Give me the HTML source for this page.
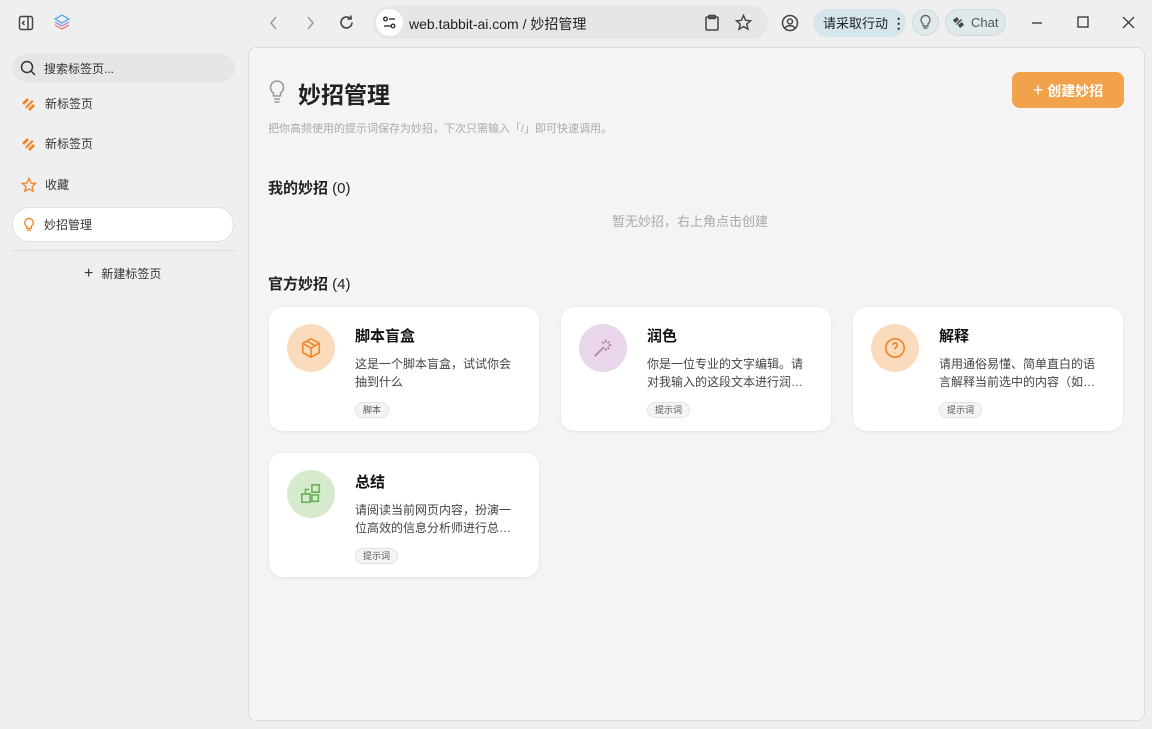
<!DOCTYPE html>
<html><head><meta charset="utf-8"><style>
*{box-sizing:border-box;margin:0;padding:0}
body{width:1152px;height:729px;background:#efefef;font-family:"Liberation Sans","Noto Sans CJK SC",sans-serif;position:relative;overflow:hidden;color:#222}
.abs{position:absolute}
.side-item{position:absolute;left:12px;width:222px;height:35px;display:flex;align-items:center;padding-left:9px;font-size:12px;color:#333}
.side-item svg{margin-right:8px}
.main{position:absolute;left:248px;top:47px;width:897px;height:674px;background:#f4f4f6;border:1px solid #ddd;border-radius:8px}
.card{position:absolute;width:270px;height:124px;background:#fff;border-radius:14px;box-shadow:0 1px 3px rgba(0,0,0,.08)}
.card .ic{position:absolute;left:18px;top:17px;width:48px;height:48px;border-radius:50%;display:flex;align-items:center;justify-content:center}
.card h3{position:absolute;left:86px;top:18px;font-size:15px;font-weight:bold;color:#111}
.card p{position:absolute;left:86px;top:48px;width:162px;font-size:12px;line-height:18px;color:#444;display:-webkit-box;-webkit-line-clamp:2;-webkit-box-orient:vertical;overflow:hidden}
.card .tag{position:absolute;left:86px;top:95px;height:16px;padding:0 7px;font-size:9px;line-height:14px;border:1px solid #e2e2e2;background:#f4f4f4;border-radius:8px;color:#555}
</style></head><body>
<!-- top bar -->
<svg class="abs" style="left:18px;top:15px" width="16" height="16" viewBox="0 0 16 16" fill="none" stroke="#444" stroke-width="1.5"><rect x="1.5" y="1.5" width="13" height="13" rx="2"/><path d="M10 2v12M6.5 6l-2 2 2 2"/></svg>
<svg class="abs" style="left:53px;top:13px" width="18" height="18" viewBox="0 0 18 18" fill="none" stroke-width="1.4"><path d="M9 2l7 4-7 4-7-4z" stroke="#5ab0e8"/><path d="M2 9l7 4 7-4" stroke="#b08ad8"/><path d="M2 12l7 4 7-4" stroke="#f08080"/></svg>
<svg class="abs" style="left:268px;top:15px" width="12" height="16" viewBox="0 0 12 16" fill="none" stroke="#999" stroke-width="1.5"><path d="M8 2L3 8l5 6"/></svg>
<svg class="abs" style="left:304px;top:15px" width="12" height="16" viewBox="0 0 12 16" fill="none" stroke="#999" stroke-width="1.5"><path d="M4 2l5 6-5 6"/></svg>
<svg class="abs" style="left:338px;top:14px" width="17" height="17" viewBox="0 0 17 17" fill="none" stroke="#444" stroke-width="1.6"><path d="M14 8.5A5.5 5.5 0 1 1 12 4.2"/><path d="M13 1.5v3.5H9.5"/></svg>
<div class="abs" style="left:373px;top:6px;width:395px;height:33px;border-radius:17px;background:#e6e6e6"></div>
<div class="abs" style="left:376px;top:9px;width:27px;height:27px;border-radius:50%;background:#fff"></div>
<svg class="abs" style="left:382px;top:15px" width="15" height="15" viewBox="0 0 15 15" fill="none" stroke="#333" stroke-width="1.4"><circle cx="3.5" cy="4" r="1.8"/><path d="M7 4h6"/><circle cx="11" cy="11" r="1.8"/><path d="M2 11h7"/></svg>
<div class="abs" style="left:409px;top:14px;font-size:14px;color:#222">web.tabbit-ai.com / 妙招管理</div>
<svg class="abs" style="left:704px;top:14px" width="16" height="17" viewBox="0 0 16 17" fill="none" stroke="#444" stroke-width="1.5"><rect x="2" y="3" width="12" height="13" rx="1"/><rect x="5" y="1.5" width="6" height="3"/></svg>
<svg class="abs" style="left:735px;top:14px" width="17" height="17" viewBox="0 0 24 24" fill="none" stroke="#444" stroke-width="2"><path d="M12 2l3 7 7 .6-5.4 4.7 1.7 7.2L12 17.8 5.7 21.5l1.7-7.2L2 9.6 9 9z"/></svg>
<svg class="abs" style="left:781px;top:14px" width="18" height="18" viewBox="0 0 18 18" fill="none" stroke="#444" stroke-width="1.5"><circle cx="9" cy="9" r="7.5"/><circle cx="9" cy="7.5" r="2.5"/><path d="M4 14c2-3 8-3 10 0"/></svg>
<div class="abs" style="left:813px;top:9px;width:93px;height:28px;border-radius:14px;background:#d5e7ec;font-size:13px;line-height:28px;padding-left:10px;color:#222">请采取行动 <b style="font-size:14px">⋮</b></div>
<div class="abs" style="left:912px;top:9px;width:27px;height:27px;border-radius:50%;background:#dfe9ec;border:1px solid #cbdadf"></div>
<svg class="abs" style="left:919px;top:14px" width="13" height="17" viewBox="0 0 13 17" fill="none" stroke="#555" stroke-width="1.2"><path d="M6.5 1.5a4.5 4.5 0 0 0-2.5 8.2V12h5V9.7A4.5 4.5 0 0 0 6.5 1.5zM4.5 14h4"/></svg>
<div class="abs" style="left:945px;top:9px;width:61px;height:27px;border-radius:14px;background:#dfe9ec;border:1px solid #cbdadf;font-size:13px;line-height:25px;padding-left:25px;color:#555">Chat</div>
<svg class="abs" style="left:951px;top:15px" width="15" height="15" viewBox="0 0 15 15" fill="#444"><path d="M2 5l4-3 2 3-4 3zM7 10l4-3 2 3-4 3zM5 9l5-5 1 1-5 5z"/></svg>
<svg class="abs" style="left:1030px;top:16px" width="14" height="14" stroke="#222" stroke-width="1.2"><path d="M2 7h10"/></svg>
<svg class="abs" style="left:1077px;top:16px" width="12" height="12" fill="none" stroke="#222" stroke-width="1.2"><rect x="1" y="1" width="10" height="10"/></svg>
<svg class="abs" style="left:1122px;top:16px" width="13" height="13" stroke="#222" stroke-width="1.2"><path d="M1 1l11 11M12 1L1 12"/></svg>

<!-- sidebar -->
<div class="abs" style="left:12px;top:54px;width:223px;height:28px;border-radius:14px;background:#e6e6e6"></div>
<svg class="abs" style="left:20px;top:60px" width="16" height="16" fill="none" stroke="#333" stroke-width="1.5"><circle cx="7" cy="7" r="5.5"/><path d="M11 11l4 4"/></svg>
<div class="abs" style="left:44px;top:60px;font-size:12px;color:#333">搜索标签页...</div>
<div class="side-item" style="top:86px"><svg width="16" height="16" viewBox="0 0 16 16" fill="#f0862a"><path d="M1 7l5-5 2 2-5 5zM7 13l5-5 2 2-5 5zM4 11l7-7 1.5 1.5-7 7z"/></svg>新标签页</div>
<div class="side-item" style="top:126px"><svg width="16" height="16" viewBox="0 0 16 16" fill="#f0862a"><path d="M1 7l5-5 2 2-5 5zM7 13l5-5 2 2-5 5zM4 11l7-7 1.5 1.5-7 7z"/></svg>新标签页</div>
<div class="side-item" style="top:167px"><svg width="16" height="16" viewBox="0 0 24 24" fill="none" stroke="#f0862a" stroke-width="2"><path d="M12 2l3 7 7 .6-5.4 4.7 1.7 7.2L12 17.8 5.7 21.5l1.7-7.2L2 9.6 9 9z"/></svg>收藏</div>
<div class="side-item" style="top:207px;background:#fff;border:1px solid #e0e0e0;border-radius:17px"><svg width="14" height="16" viewBox="0 0 13 17" fill="none" stroke="#f0862a" stroke-width="1.4"><path d="M6.5 1.5a4.5 4.5 0 0 0-2.5 8.2V12h5V9.7A4.5 4.5 0 0 0 6.5 1.5zM4.5 14h4"/></svg>妙招管理</div>
<div class="abs" style="left:12px;top:250px;width:224px;height:1px;background:#ddd"></div>
<div class="abs" style="left:84px;top:265px;font-size:12px;color:#333"><span style="font-size:16px;margin-right:8px">+</span>新建标签页</div>

<!-- main -->
<div class="main"></div>
<svg class="abs" style="left:268px;top:79px" width="18" height="26" viewBox="0 0 18 26" fill="none" stroke="#999" stroke-width="1.6"><path d="M9 2a6.5 6.5 0 0 0-3.5 12V17h7v-3A6.5 6.5 0 0 0 9 2zM6 20h6M6.5 23h5"/></svg>
<div class="abs" style="left:298px;top:76px;font-size:23px;font-weight:bold;color:#222">妙招管理</div>
<div class="abs" style="left:268px;top:120px;font-size:11px;color:#aaa">把你高频使用的提示词保存为妙招，下次只需输入「/」即可快速调用。</div>
<div class="abs" style="left:1012px;top:72px;width:112px;height:36px;border-radius:8px;background:#f3a24c;color:#fff;font-size:14px;font-weight:bold;line-height:36px;text-align:center"><span style="font-size:18px;font-weight:normal">+</span> 创建妙招</div>
<div class="abs" style="left:268px;top:177px;font-size:15px;font-weight:bold;color:#222">我的妙招 <span style="font-weight:normal">(0)</span></div>
<div class="abs" style="left:612px;top:211px;font-size:13px;color:#aaa">暂无妙招，右上角点击创建</div>
<div class="abs" style="left:268px;top:273px;font-size:15px;font-weight:bold;color:#222">官方妙招 <span style="font-weight:normal">(4)</span></div>

<div class="card" style="left:269px;top:307px"><div class="ic" style="background:#fadcbd"><svg width="22" height="22" viewBox="0 0 24 24" fill="none" stroke="#f0862a" stroke-width="1.8"><path d="M12 2l9 5v10l-9 5-9-5V7z"/><path d="M3 7l9 5 9-5M12 12v10M7.5 4.5l9 5"/></svg></div><h3>脚本盲盒</h3><p>这是一个脚本盲盒，试试你会抽到什么</p><div class="tag">脚本</div></div>
<div class="card" style="left:561px;top:307px"><div class="ic" style="background:#ead6ea"><svg width="22" height="22" viewBox="0 0 24 24" fill="none" stroke="#b77db5" stroke-width="1.8"><path d="M3 21l10-10M15 3v3M15 12v3M19 5l-2 2M19 13l-2-2M21 9h-3M11 5l2 2"/></svg></div><h3>润色</h3><p>你是一位专业的文字编辑。请对我输入的这段文本进行润色，使其更加流畅</p><div class="tag">提示词</div></div>
<div class="card" style="left:853px;top:307px"><div class="ic" style="background:#fadcbd"><svg width="22" height="22" viewBox="0 0 24 24" fill="none" stroke="#f0862a" stroke-width="1.8"><circle cx="12" cy="12" r="10"/><path d="M9.5 9a2.5 2.5 0 1 1 3.5 2.3c-.7.4-1 1-1 1.7v.5M12 17v.5"/></svg></div><h3>解释</h3><p>请用通俗易懂、简单直白的语言解释当前选中的内容（如果是专业术语）</p><div class="tag">提示词</div></div>
<div class="card" style="left:269px;top:453px"><div class="ic" style="background:#d6ebce"><svg width="22" height="22" viewBox="0 0 24 24" fill="none" stroke="#6bb35a" stroke-width="1.8"><rect x="2" y="12" width="9" height="9"/><rect x="13" y="2" width="8" height="8"/><path d="M13 13h7v7h-7zM6 12V7h4"/></svg></div><h3>总结</h3><p>请阅读当前网页内容，扮演一位高效的信息分析师进行总结归纳</p><div class="tag">提示词</div></div>
</body></html>
